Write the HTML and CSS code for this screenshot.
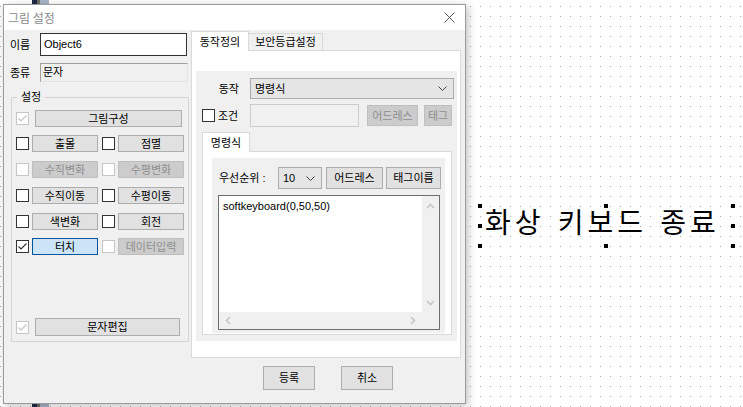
FILE: index.html
```html
<!DOCTYPE html>
<html>
<head>
  <title>그림 설정</title>
  <link rel="stylesheet" href="styles.css">
</head>
<body>
  <div class="back-strip"></div>

  <!-- selected text object on the drawing canvas -->
  <div class="canvas-item">
    <span class="item-text">화상 키보드 종료</span>
    <i class="handle" style="left:-2px;top:-2px"></i>
    <i class="handle" style="left:124px;top:-2px"></i>
    <i class="handle" style="left:251px;top:-2px"></i>
    <i class="handle" style="left:-2px;top:18px"></i>
    <i class="handle" style="left:251px;top:18px"></i>
    <i class="handle" style="left:-2px;top:38px"></i>
    <i class="handle" style="left:124px;top:38px"></i>
    <i class="handle" style="left:251px;top:38px"></i>
  </div>

  <div class="dialog">
    <div class="title-bar">
      <span class="title">그림 설정</span>
      <svg class="close" width="11" height="11" viewBox="0 0 11 11"><path d="M0.5 0.5L10.5 10.5M10.5 0.5L0.5 10.5" stroke="#555" stroke-width="1" fill="none"/></svg>
    </div>

    <div class="dialog-body">
      <div class="left-col">
        <div class="field-row">
          <span class="field-label">이름</span>
          <div class="edit name-edit">Object6</div>
        </div>
        <div class="field-row kind-row">
          <span class="field-label">종류</span>
          <div class="edit kind-edit">문자</div>
        </div>

        <div class="group">
          <div class="group-title">설정</div>
          <div class="opt-row first-row">
            <span class="cb disabled"><svg width="11" height="11" viewBox="0 0 11 11"><path d="M1.5 5.5L4 8L9.5 2.5" stroke="#c3c3c3" stroke-width="1.2" fill="none"/></svg></span>
            <span class="btn wide-btn">그림구성</span>
          </div>
          <div class="opt-row">
            <span class="cb"></span><span class="btn opt-btn">출몰</span>
            <span class="cb"></span><span class="btn opt-btn">점멸</span>
          </div>
          <div class="opt-row">
            <span class="cb disabled"></span><span class="btn opt-btn off">수직변화</span>
            <span class="cb disabled"></span><span class="btn opt-btn off">수평변화</span>
          </div>
          <div class="opt-row">
            <span class="cb"></span><span class="btn opt-btn">수직이동</span>
            <span class="cb"></span><span class="btn opt-btn">수평이동</span>
          </div>
          <div class="opt-row">
            <span class="cb"></span><span class="btn opt-btn">색변화</span>
            <span class="cb"></span><span class="btn opt-btn">회전</span>
          </div>
          <div class="opt-row touch-row">
            <span class="cb"><svg width="11" height="11" viewBox="0 0 11 11"><path d="M1.5 5.5L4 8L9.5 2.5" stroke="#333" stroke-width="1.2" fill="none"/></svg></span><span class="btn opt-btn active">터치</span>
            <span class="cb disabled"></span><span class="btn opt-btn off">데이터입력</span>
          </div>
          <div class="opt-row last-row">
            <span class="cb disabled"><svg width="11" height="11" viewBox="0 0 11 11"><path d="M1.5 5.5L4 8L9.5 2.5" stroke="#c3c3c3" stroke-width="1.2" fill="none"/></svg></span>
            <span class="btn text-btn">문자편집</span>
          </div>
        </div>
      </div>

      <div class="right-col">
        <div class="tabs">
          <span class="tab selected">동작정의</span>
          <span class="tab">보안등급설정</span>
        </div>
        <div class="tab-panel">
          <div class="action-box">
            <div class="action-row">
              <span class="action-label">동작</span>
              <div class="combo action-combo">명령식
                <svg width="9" height="5" viewBox="0 0 9 5"><path d="M0.5 0.5L4.5 4.5L8.5 0.5" stroke="#444" fill="none"/></svg>
              </div>
            </div>
            <div class="cond-row">
              <div class="cond-label"><span class="cb"></span><span>조건</span></div>
              <div class="cond-edit"></div>
              <span class="btn off addr-btn">어드레스</span>
              <span class="btn off tag-btn">태그</span>
            </div>

            <div class="inner-tabs">
              <span class="tab selected">명령식</span>
            </div>
            <div class="inner-panel">
              <div class="cmd-box">
                <div class="prio-row">
                  <span class="prio-label">우선순위 :</span>
                  <div class="combo prio-combo">10
                    <svg width="9" height="5" viewBox="0 0 9 5"><path d="M0.5 0.5L4.5 4.5L8.5 0.5" stroke="#444" fill="none"/></svg>
                  </div>
                  <span class="btn addr2-btn">어드레스</span>
                  <span class="btn tagname-btn">태그이름</span>
                </div>
                <div class="memo">
                  <div class="memo-text">softkeyboard(0,50,50)</div>
                  <div class="vscroll">
                    <svg width="9" height="6" viewBox="0 0 9 6"><path d="M1 5L4.5 1.5L8 5" stroke="#c6c6c6" stroke-width="1.6" fill="none"/></svg>
                    <svg width="9" height="6" viewBox="0 0 9 6"><path d="M1 1L4.5 4.5L8 1" stroke="#c6c6c6" stroke-width="1.6" fill="none"/></svg>
                  </div>
                  <div class="hscroll">
                    <svg width="6" height="9" viewBox="0 0 6 9"><path d="M5 1L1.5 4.5L5 8" stroke="#c6c6c6" stroke-width="1.6" fill="none"/></svg>
                    <svg width="6" height="9" viewBox="0 0 6 9"><path d="M1 1L4.5 4.5L1 8" stroke="#c6c6c6" stroke-width="1.6" fill="none"/></svg>
                  </div>
                  <div class="corner"></div>
                </div>
              </div>
            </div>
          </div>
        </div>
        <div class="dialog-buttons">
          <span class="btn dlg-btn">등록</span>
          <span class="btn dlg-btn">취소</span>
        </div>
      </div>
    </div>
  </div>
</body>
</html>
```

FILE: styles.css
```css
/* Page / drawing canvas */
body {
  margin: 0;
  width: 743px;
  height: 407px;
  overflow: hidden;
  position: relative;
  font-family: "Liberation Sans", "Noto Sans CJK KR", sans-serif;
  font-size: 11px;
  line-height: 14px;
  color: #000;
  background-color: #fff;
  background-image: conic-gradient(from 270deg at 1px 1px, #a9a9a9 90deg, transparent 0);
  background-size: 10px 10px;
  background-position: 0 6px;
}
.back-strip {
  position: absolute;
  left: 32px;
  top: 0;
  width: 17px;
  height: 407px;
  background: linear-gradient(to right, #1d2a47 0, #1d2a47 5px, #706d66 5px, #706d66 8px, #a7b5c7 8px);
}
.canvas-item {
  position: absolute;
  left: 480px;
  top: 206px;
  width: 253px;
  height: 40px;
}
.item-text {
  display: block;
  padding: 1px 0 0 5px;
  font-family: "Noto Sans CJK KR", sans-serif;
  font-size: 28px;
  line-height: 28px;
  letter-spacing: 4px;
  word-spacing: 3px;
  white-space: nowrap;
}
.handle {
  position: absolute;
  width: 4px;
  height: 4px;
  background: #000;
}

/* Dialog frame */
.dialog {
  position: absolute;
  left: 3px;
  top: 4px;
  width: 463px;
  height: 400px;
  box-sizing: border-box;
  border: 1px solid #9b9b9b;
  background: #f0f0f0;
  box-shadow: 2px 2px 8px rgba(0, 0, 0, 0.25);
  display: flex;
  flex-direction: column;
}
.title-bar {
  height: 25px;
  flex: none;
  background: #fff;
  display: flex;
  align-items: center;
  justify-content: space-between;
  padding: 0 10px 0 4px;
}
.title {
  font-family: "Noto Sans CJK KR", sans-serif;
  font-size: 12px;
  color: #8a8a8a;
}
.dialog-body {
  flex: 1;
  display: flex;
}

/* Common controls */
.btn {
  box-sizing: border-box;
  display: flex;
  align-items: center;
  justify-content: center;
  background: #e1e1e1;
  border: 1px solid #adadad;
  white-space: nowrap;
}
.btn.off {
  background: #cccccc;
  border-color: #bfbfbf;
  color: #8e8e8e;
}
.btn.active {
  background: #cce4f7;
  border-color: #005499;
}
.cb {
  box-sizing: border-box;
  width: 13px;
  height: 13px;
  flex: none;
  border: 1px solid #333;
  background: #fff;
  display: flex;
}
.cb.disabled {
  border-color: #c6c6c6;
}
.combo {
  box-sizing: border-box;
  display: flex;
  align-items: center;
  justify-content: space-between;
  background: #e5e5e5;
  border: 1px solid #acacac;
  padding: 0 6px 0 4px;
}

/* Left column */
.left-col {
  width: 187px;
  flex: none;
}
.field-row {
  display: flex;
  align-items: center;
  margin-top: 3px;
}
.kind-row {
  margin-top: 7px;
}
.field-label {
  width: 30px;
  padding-left: 6px;
}
.edit {
  box-sizing: border-box;
  padding-left: 3px;
}
.name-edit {
  width: 147px;
  height: 23px;
  line-height: 21px;
  border: 1px solid #333;
  background: #fff;
}
.kind-edit {
  width: 148px;
  height: 19px;
  line-height: 17px;
  padding-left: 2px;
  border: 1px solid;
  border-color: #a0a0a0 #e3e3e3 #e3e3e3 #a0a0a0;
}
.group {
  box-sizing: border-box;
  margin: 15px 0 0 7px;
  width: 178px;
  height: 245px;
  border: 1px solid #d5d5d5;
  padding: 0 0 5px 4px;
  display: flex;
  flex-direction: column;
}
.group-title {
  align-self: flex-start;
  margin: -8px 0 0 1px;
  padding: 0 4px;
  background: #f0f0f0;
}
.opt-row {
  display: flex;
  align-items: center;
  margin-top: 9px;
}
.first-row {
  margin-top: 6px;
}
.opt-row:nth-of-type(3) {
  margin-top: 8px;
}
.touch-row {
  margin-top: 8px;
}
.last-row {
  margin-top: auto;
}
.wide-btn {
  width: 147px;
  height: 17px;
  margin-left: 6px;
}
.opt-btn {
  width: 67px;
  height: 17px;
  margin: 0 4px 0 3px;
}
.text-btn {
  width: 145px;
  height: 18px;
  margin-left: 6px;
}

/* Right column: tabs */
.right-col {
  width: 270px;
  flex: none;
}
.tabs,
.inner-tabs {
  height: 20px;
  display: flex;
  align-items: flex-end;
}
.tab {
  box-sizing: border-box;
  height: 17px;
  display: flex;
  align-items: center;
  justify-content: center;
  background: #f0f0f0;
  border: 1px solid #d9d9d9;
  border-bottom: none;
  border-left: none;
  width: 74px;
}
.tab.selected {
  position: relative;
  z-index: 1;
  height: 20px;
  width: 58px;
  margin-bottom: -1px;
  background: #fff;
  border-left: 1px solid #d9d9d9;
}
.tab-panel {
  box-sizing: border-box;
  height: 308px;
  background: #fff;
  border: 1px solid #d9d9d9;
  padding: 20px 0 0 4px;
}
.action-box {
  width: 261px;
  height: 270px;
  background: #f0f0f0;
  padding-top: 7px;
  box-sizing: border-box;
}
.action-row {
  display: flex;
  align-items: center;
}
.action-label {
  width: 43px;
  padding-right: 11px;
  text-align: right;
}
.action-combo {
  width: 204px;
  height: 21px;
}
.cond-row {
  display: flex;
  align-items: center;
  margin-top: 5px;
  height: 23px;
}
.cond-label {
  width: 48px;
  padding-left: 6px;
  display: flex;
  align-items: center;
  gap: 3px;
}
.cond-edit {
  box-sizing: border-box;
  width: 109px;
  height: 23px;
  border: 1px solid #cccccc;
  background: #f0f0f0;
}
.addr-btn {
  width: 51px;
  height: 21px;
  margin-left: 8px;
}
.tag-btn {
  width: 28px;
  height: 21px;
  margin-left: 6px;
}
.inner-tabs {
  margin: 4px 0 0 6px;
}
.inner-tabs .tab.selected {
  width: 48px;
}
.inner-panel {
  box-sizing: border-box;
  margin-left: 6px;
  width: 250px;
  height: 184px;
  background: #fff;
  border: 1px solid #d9d9d9;
  padding: 6px 0 0 9px;
}
.cmd-box {
  width: 233px;
  height: 175px;
  background: #f0f0f0;
  padding: 9px 0 0 6px;
  box-sizing: border-box;
}
.prio-row {
  display: flex;
  align-items: center;
  height: 22px;
}
.prio-label {
  width: 59px;
  padding-left: 1px;
}
.prio-combo {
  width: 44px;
  height: 22px;
}
.addr2-btn {
  width: 57px;
  height: 22px;
  margin-left: 4px;
}
.tagname-btn {
  width: 55px;
  height: 22px;
  margin-left: 3px;
}

/* Command memo with scrollbars */
.memo {
  box-sizing: border-box;
  margin-top: 6px;
  width: 222px;
  height: 135px;
  border: 1px solid #6e6e6e;
  background: #fff;
  display: grid;
  grid-template-columns: 1fr 17px;
  grid-template-rows: 1fr 17px;
}
.memo-text {
  padding: 3px 0 0 4px;
}
.vscroll {
  background: #f0f0f0;
  display: flex;
  flex-direction: column;
  align-items: center;
  justify-content: space-between;
  padding: 7px 0 6px;
}
.hscroll {
  background: #f0f0f0;
  display: flex;
  align-items: center;
  justify-content: space-between;
  padding: 0 6px 0 6px;
}
.corner {
  background: #f0f0f0;
}

/* OK / Cancel */
.dialog-buttons {
  display: flex;
  gap: 26px;
  margin-top: 8px;
  padding-left: 72px;
}
.dlg-btn {
  width: 52px;
  height: 24px;
}
```
